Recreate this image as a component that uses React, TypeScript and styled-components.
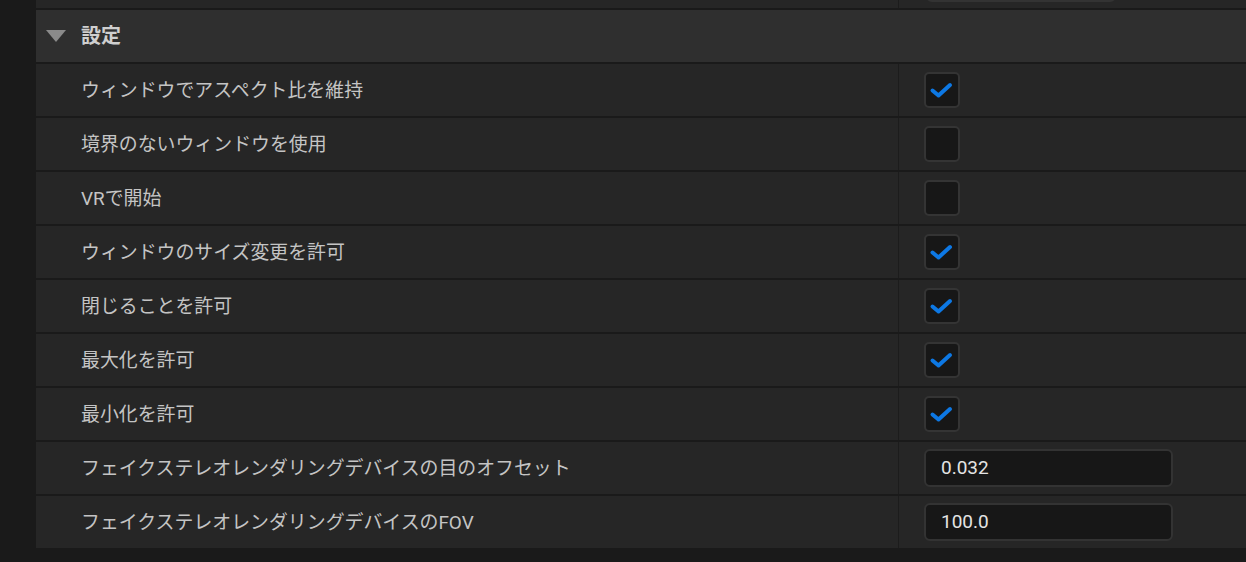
import React from "react";
import styled, { createGlobalStyle } from "styled-components";

const Global = createGlobalStyle`
  html, body { margin: 0; padding: 0; background: #1a1a1a; }
  body { font-family: Roboto, "Noto Sans CJK JP", sans-serif; }
  * { box-sizing: border-box; }
`;

const Page = styled.div`
  width: 1246px;
  height: 562px;
  overflow: hidden;
  background: #1a1a1a;
  padding-left: 36px;
`;

const Panel = styled.div`
  display: flex;
  flex-direction: column;
  gap: 2px;
`;

const Row = styled.div<{ $h?: number }>`
  display: flex;
  height: ${(p) => p.$h ?? 52}px;
  background: #262626;
  overflow: hidden;
`;

const LabelCell = styled.div`
  width: 863px;
  flex: none;
  display: flex;
  align-items: center;
  padding-left: 45px;
  padding-bottom: 3px;
  font-family: Roboto, "Noto Sans CJK JP", sans-serif;
  font-size: 18.9px;
  color: #c4c4c4;
  white-space: nowrap;
  border-right: 1px solid #1c1c1c;
`;

const ValueCell = styled.div<{ $top?: boolean }>`
  flex: 1;
  display: flex;
  align-items: ${(p) => (p.$top ? "flex-start" : "center")};
  padding-left: 25px;
`;

const Header = styled.div`
  display: flex;
  align-items: center;
  height: 52px;
  background: #2f2f2f;
  padding-left: 10px;
  gap: 15px;
  font-family: Roboto, "Noto Sans CJK JP", sans-serif;
  font-weight: 700;
  font-size: 20px;
  color: #cfcfcf;
`;

const HeaderTitle = styled.span`
  padding-bottom: 3px;
`;

const Caret = styled.div`
  width: 0;
  height: 0;
  border-left: 10px solid transparent;
  border-right: 10px solid transparent;
  border-top: 12px solid #8a8a8a;
`;

const Box = styled.div`
  width: 36px;
  height: 36px;
  border: 2px solid #343434;
  border-radius: 5px;
  background: #171717;
  display: flex;
  align-items: center;
  justify-content: center;
`;

const NumberField = styled.div`
  width: 249px;
  height: 38px;
  border: 2px solid #333333;
  border-radius: 6px;
  background: #171717;
  display: flex;
  align-items: center;
  padding-left: 15px;
  padding-bottom: 1px;
  font-family: Roboto, "Noto Sans", sans-serif;
  font-size: 19px;
  color: #e4e4e4;
`;

const FieldStub = styled.div`
  margin-left: 2px;
  margin-top: -34px;
  width: 190px;
  height: 36px;
  border: 2px solid #333333;
  border-radius: 6px;
  background: #171717;
`;

const Check = () => (
  <svg width="32" height="32" viewBox="0 0 32 32">
    <path
      d="M6.5 16.5 L12.5 21.5 L24 11"
      fill="none"
      stroke="#0d78e4"
      strokeWidth="4"
      strokeLinecap="round"
      strokeLinejoin="round"
    />
  </svg>
);

type Item =
  | { label: string; kind: "check"; checked: boolean }
  | { label: string; kind: "number"; value: string };

const items: Item[] = [
  { label: "ウィンドウでアスペクト比を維持", kind: "check", checked: true },
  { label: "境界のないウィンドウを使用", kind: "check", checked: false },
  { label: "VRで開始", kind: "check", checked: false },
  { label: "ウィンドウのサイズ変更を許可", kind: "check", checked: true },
  { label: "閉じることを許可", kind: "check", checked: true },
  { label: "最大化を許可", kind: "check", checked: true },
  { label: "最小化を許可", kind: "check", checked: true },
  { label: "フェイクステレオレンダリングデバイスの目のオフセット", kind: "number", value: "0.032" },
  { label: "フェイクステレオレンダリングデバイスのFOV", kind: "number", value: "100.0" },
];

export default function App() {
  return (
    <>
      <Global />
      <Page>
        <Panel>
          <Row $h={8}>
            <LabelCell />
            <ValueCell $top>
              <FieldStub />
            </ValueCell>
          </Row>
          <Header>
            <Caret />
            <HeaderTitle>設定</HeaderTitle>
          </Header>
          {items.map((it) => (
            <Row key={it.label}>
              <LabelCell>{it.label}</LabelCell>
              <ValueCell>
                {it.kind === "check" ? (
                  <Box>{it.checked && <Check />}</Box>
                ) : (
                  <NumberField>{it.value}</NumberField>
                )}
              </ValueCell>
            </Row>
          ))}
        </Panel>
      </Page>
    </>
  );
}
